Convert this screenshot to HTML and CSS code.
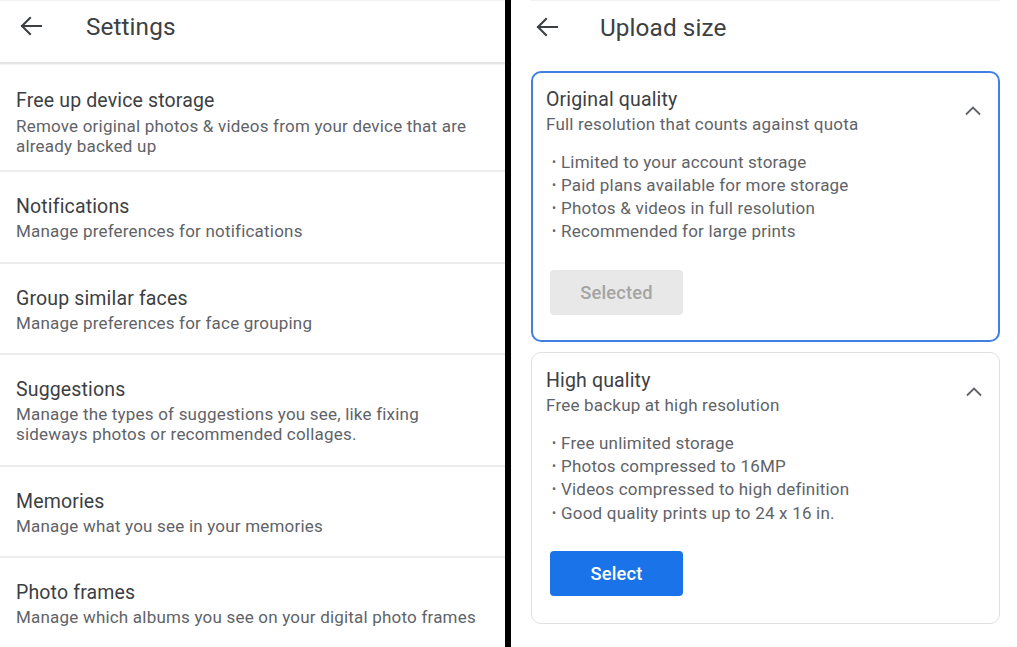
FILE: index.html
```html
<!DOCTYPE html>
<html>
<head>
<meta charset="utf-8">
<link rel="stylesheet" href="styles.css">
</head>
<body>
<div class="screen">
  <section class="panel left">
    <header class="bar bar-line">
      <svg class="back" width="24" height="24" viewBox="0 0 24 24"><path d="M22 12H3M11 4l-8 8 8 8" fill="none" stroke="#3c4043" stroke-width="2.1" stroke-linecap="square" stroke-linejoin="miter"/></svg>
      <h1 class="bar-title">Settings</h1>
    </header>
    <ul class="items">
      <li class="item first"><div class="item-title">Free up device storage</div><div class="item-sub">Remove original photos &amp; videos from your device that are already backed up</div></li>
      <li class="item"><div class="item-title">Notifications</div><div class="item-sub">Manage preferences for notifications</div></li>
      <li class="item"><div class="item-title">Group similar faces</div><div class="item-sub">Manage preferences for face grouping</div></li>
      <li class="item"><div class="item-title">Suggestions</div><div class="item-sub">Manage the types of suggestions you see, like fixing sideways photos or recommended collages.</div></li>
      <li class="item"><div class="item-title">Memories</div><div class="item-sub">Manage what you see in your memories</div></li>
      <li class="item last"><div class="item-title">Photo frames</div><div class="item-sub">Manage which albums you see on your digital photo frames</div></li>
    </ul>
  </section>
  <div class="divider"></div>
  <section class="panel right">
    <header class="bar">
      <svg class="back" width="24" height="24" viewBox="0 0 24 24"><path d="M22 12H3M11 4l-8 8 8 8" fill="none" stroke="#3c4043" stroke-width="2.1" stroke-linecap="square" stroke-linejoin="miter"/></svg>
      <h1 class="bar-title">Upload size</h1>
    </header>
    <div class="cards">
      <div class="card selected">
        <div class="card-head">
          <div>
            <div class="card-title">Original quality</div>
            <div class="card-sub">Full resolution that counts against quota</div>
          </div>
          <svg class="chev" width="18" height="10" viewBox="0 0 18 10"><path d="M2 8.5l7-7 7 7" fill="none" stroke="#5f6368" stroke-width="1.8"/></svg>
        </div>
        <ul class="bullets">
          <li><span class="dot">•</span>Limited to your account storage</li>
          <li><span class="dot">•</span>Paid plans available for more storage</li>
          <li><span class="dot">•</span>Photos &amp; videos in full resolution</li>
          <li><span class="dot">•</span>Recommended for large prints</li>
        </ul>
        <button class="btn btn-disabled">Selected</button>
      </div>
      <div class="card">
        <div class="card-head">
          <div>
            <div class="card-title">High quality</div>
            <div class="card-sub">Free backup at high resolution</div>
          </div>
          <svg class="chev" width="18" height="10" viewBox="0 0 18 10"><path d="M2 8.5l7-7 7 7" fill="none" stroke="#5f6368" stroke-width="1.8"/></svg>
        </div>
        <ul class="bullets">
          <li><span class="dot">•</span>Free unlimited storage</li>
          <li><span class="dot">•</span>Photos compressed to 16MP</li>
          <li><span class="dot">•</span>Videos compressed to high definition</li>
          <li><span class="dot">•</span>Good quality prints up to 24 x 16 in.</li>
        </ul>
        <button class="btn btn-primary">Select</button>
      </div>
    </div>
  </section>
</div>
</body>
</html>
```

FILE: styles.css
```css
* { box-sizing: border-box; }
html, body { margin: 0; padding: 0; background: #fff; }
body {
  font-family: Roboto, "Noto Sans", Arial, sans-serif;
  width: 1017px;
  height: 647px;
  overflow: hidden;
}
.screen {
  display: flex;
  height: 647px;
}
.panel { background: #fff; height: 647px; overflow: hidden; }
.left { width: 505px; flex: none; }
.divider { width: 6px; flex: none; background: #000; }
.right { flex: 1; padding: 0 17px 0 20px; }

.bar {
  height: 64px;
  display: flex;
  align-items: center;
  padding-left: 19px;
  padding-bottom: 11px;
  border-top: 1px solid #f1f1f1;
}
.right .bar { padding-left: 4px; }
.bar-line {
  border-bottom: 2px solid #e6e6e6;
  box-shadow: 0 1px 0 #f3f3f3;
}
.back { flex: none; }
.bar-title {
  margin: 0 0 0 43px;
  font-size: 24.3px;
  font-weight: 400;
  letter-spacing: 0.1px;
  color: #3c4043;
}
.right .bar-title { margin-left: 41px; }

.items { list-style: none; margin: 0; padding: 0; }
.item {
  padding: 22px 16px 20.5px;
  border-bottom: 2px solid #ececec;
}
.item.first { padding-top: 23.5px; padding-bottom: 14.5px; }
.item.first .item-sub { margin-top: 2px; }
.item.last { border-bottom: none; }
.item-title {
  font-size: 19.5px;
  line-height: 26px;
  letter-spacing: 0.15px;
  color: #3c4043;
}
.item-sub {
  margin-top: 1px;
  font-size: 17px;
  line-height: 20px;
  letter-spacing: 0.2px;
  color: #5f6368;
}

.cards {
  margin-top: 7px;
  display: flex;
  flex-direction: column;
  gap: 10px;
}
.card {
  border: 1px solid #e0e0e0;
  border-radius: 10px;
  padding: 15px 16px 27px 14px;
}
.card.selected {
  border: 2px solid #3f80e0;
  padding-top: 14px;
  padding-bottom: 25px;
}
.card.selected .card-head,
.card.selected .bullets { margin-left: -1px; }
.card-head {
  display: flex;
  justify-content: space-between;
  align-items: flex-start;
}
.chev { margin-top: 19px; }
.card-title {
  font-size: 19.5px;
  line-height: 26px;
  letter-spacing: 0.15px;
  color: #3c4043;
}
.card-sub {
  font-size: 17px;
  line-height: 22px;
  letter-spacing: 0.2px;
  color: #5f6368;
}
.bullets {
  list-style: none;
  margin: 15.5px 0 0;
  padding: 0 0 0 5px;
  font-size: 17px;
  line-height: 23.3px;
  letter-spacing: 0.2px;
  color: #5f6368;
}
.bullets li { display: flex; }
.dot { width: 10px; font-size: 12px; padding-left: 1px; }
.btn {
  display: block;
  margin-top: 26.5px;
  margin-left: 4px;
  width: 133px;
  height: 45px;
  border: none;
  border-radius: 4px;
  font-family: Roboto, "Noto Sans", Arial, sans-serif;
  font-size: 18.3px;
  font-weight: 500;
  letter-spacing: 0.2px;
}
.card.selected .btn { margin-left: 3px; }
.btn-disabled { background: #e8e8e8; color: #a4a4a4; }
.btn-primary { background: #1a73e8; color: #fff; }
```
